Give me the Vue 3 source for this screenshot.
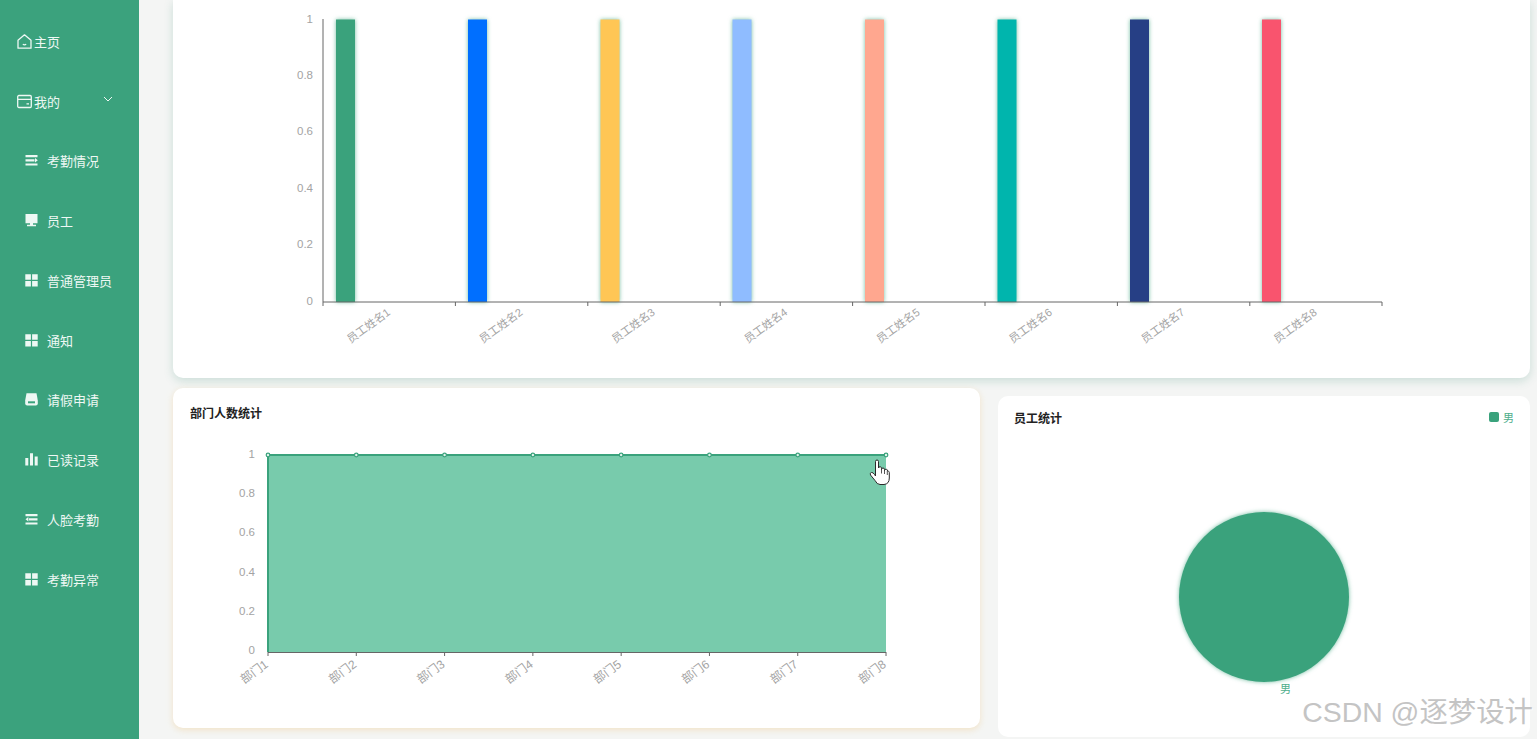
<template>
  <div class="page">
    <svg class="defs" width="0" height="0">
      <symbol id="i-home" viewBox="0 0 15 15">
        <path d="M1 6.200 7.500 0.800 14 6.200V14.200H1Z" fill="none" stroke="currentColor" stroke-width="1.300" stroke-linejoin="round" />
        <path d="M5.800 10.300q1.700 1 3.400 0" fill="none" stroke="currentColor" stroke-width="1.300" />
      </symbol>
      <symbol id="i-wallet" viewBox="0 0 15 15">
        <rect x="0.700" y="1.500" width="13.600" height="12" rx="1.200" fill="none" stroke="currentColor" stroke-width="1.300" />
        <path d="M1 5.400H14M9.500 9.800H12" fill="none" stroke="currentColor" stroke-width="1.300" />
      </symbol>
      <symbol id="i-list" viewBox="0 0 13 13">
        <path d="M0.500 1H12.500V3.200H0.500ZM0.500 5.200H9.500V7.400H0.500ZM0.500 9.400H12.500V11.600H0.500Z" fill="currentColor" />
        <path d="M10 4 12.800 6.300 10 8.600Z" fill="currentColor" />
      </symbol>
      <symbol id="i-indent" viewBox="0 0 13 13">
        <path d="M0.500 1H12.500V3.200H0.500ZM3.800 5.200H12.500V7.400H3.800ZM0.500 9.400H12.500V11.600H0.500Z" fill="currentColor" />
        <path d="M3.300 4 0.500 6.300 3.300 8.600Z" fill="currentColor" />
      </symbol>
      <symbol id="i-monitor" viewBox="0 0 13 13">
        <path d="M0.500 0H12.500V9.300H0.500ZM5 9.300H8V10.800H11V12.200H2V10.800H5Z" fill="currentColor" />
      </symbol>
      <symbol id="i-grid" viewBox="0 0 13 13">
        <path d="M0.300 0.300H5.900V5.800H0.300ZM7.100 0.300H12.700V5.800H7.100ZM0.300 7H5.900V12.500H0.300ZM7.100 7H12.700V12.500H7.100Z" fill="currentColor" />
      </symbol>
      <symbol id="i-inbox" viewBox="0 0 13 13">
        <path d="M1.500 0.300H11.500L12.800 7.500V10.500Q12.800 12.500 10.800 12.500H2.200Q0.200 12.500 0.200 10.500V7.500Z" fill="currentColor" />
        <path d="M3 8.300H10V10.300H3Z" fill="#3aa27c" />
      </symbol>
      <symbol id="i-bars" viewBox="0 0 13 13">
        <path d="M0.300 5H3.300V12.500H0.300ZM5 0.300H8V12.500H5ZM9.700 3.500H12.700V12.500H9.700Z" fill="currentColor" />
      </symbol>
    </svg>

    <aside class="sidebar">
      <div v-for="item in menu" :key="item.label" class="menu-item" :class="{ sub: item.sub }">
        <svg class="menu-icon"><use :href="'#' + item.icon" /></svg>
        <span>{{ item.label }}</span>
        <svg v-if="item.arrow" class="arrow" viewBox="0 0 10 6">
          <path d="M1 1 5 5 9 1" fill="none" stroke="currentColor" stroke-width="1" />
        </svg>
      </div>
    </aside>

    <main class="main">
      <section class="card top-card">
        <svg class="chart" width="1357" height="378" viewBox="173 0 1357 378">
          <g v-for="(bar, i) in bars" :key="bar.name">
            <rect class="bar" :x="bar.x" y="19.500" width="19" height="282.500" :fill="bar.color" />
            <line :x1="323 + i * 132.400" y1="302" :x2="323 + i * 132.400" y2="306" class="axis" />
            <text class="tick tick-x" text-anchor="end" :transform="`translate(${391 + i * 132.400} 314) rotate(-36)`">{{ bar.name }}</text>
          </g>
          <line x1="1382" y1="302" x2="1382" y2="306" class="axis" />
          <line x1="323" y1="19" x2="323" y2="302" class="axis" />
          <line x1="323" y1="302" x2="1382" y2="302" class="axis" />
          <text v-for="t in barTicks" :key="t.label" class="tick" x="313" :y="t.y" text-anchor="end">{{ t.label }}</text>
        </svg>
      </section>

      <div class="bottom-row">
        <section class="card dept-card">
          <h3 class="card-title">部门人数统计</h3>
          <svg class="chart" width="807" height="298" viewBox="173 430 807 298">
            <rect x="268" y="455" width="618" height="197" fill="#78cbac" />
            <path d="M268 652V455H886" fill="none" stroke="#3aa27c" stroke-width="2" />
            <line x1="268" y1="652.500" x2="886" y2="652.500" class="axis" />
            <g v-for="(p, i) in depts" :key="p">
              <line :x1="268 + i * 88.290" y1="652" :x2="268 + i * 88.290" y2="656" class="axis" />
              <circle :cx="268 + i * 88.290" cy="455" r="1.800" fill="#dff3eb" stroke="#3aa27c" stroke-width="1.200" />
              <text class="tick tick-dept" text-anchor="end" :transform="`translate(${269 + i * 88.290} 666) rotate(-36)`">{{ p }}</text>
            </g>
            <text v-for="t in areaTicks" :key="t.label" class="tick" x="255" :y="t.y" text-anchor="end">{{ t.label }}</text>
            <!-- 鼠标手型 -->
            <path d="M875.500 461.500a1.500 1.500 0 0 1 3 0V468a1.500 1.500 0 0 1 3 .5v1a1.500 1.500 0 0 1 3 0v1a1.400 1.400 0 0 1 3 0.500c1 0 1.800 .5 1.800 1.500V478q0 6-5.300 6.500h-4q-3 0-5-4l-4.500-5.500q-1-2 1-2.500q1.500-.3 3 2l1 1.500Z" fill="#fff" stroke="#2b2b2b" stroke-width="1" stroke-linejoin="round" />
            <path d="M881.500 469v4.500M884.500 470v4M887.300 471v4" stroke="#2b2b2b" stroke-width="0.800" fill="none" />
          </svg>
        </section>

        <section class="card staff-card">
          <div class="staff-head">
            <h3 class="card-title">员工统计</h3>
            <div class="legend"><i class="legend-mark"></i><span>男</span></div>
          </div>
          <div class="pie-wrap">
            <div class="pie"></div>
            <span class="pie-label">男</span>
          </div>
        </section>
      </div>
    </main>

    <div class="watermark">CSDN @逐梦设计</div>
  </div>
</template>

<script setup>
const menu = [
  { label: '主页', icon: 'i-home' },
  { label: '我的', icon: 'i-wallet', arrow: true },
  { label: '考勤情况', icon: 'i-list', sub: true },
  { label: '员工', icon: 'i-monitor', sub: true },
  { label: '普通管理员', icon: 'i-grid', sub: true },
  { label: '通知', icon: 'i-grid', sub: true },
  { label: '请假申请', icon: 'i-inbox', sub: true },
  { label: '已读记录', icon: 'i-bars', sub: true },
  { label: '人脸考勤', icon: 'i-indent', sub: true },
  { label: '考勤异常', icon: 'i-grid', sub: true },
];

const barColors = ['#3aa27c', '#006fff', '#ffc655', '#8fbcff', '#ffa78f', '#00b5ad', '#263f85', '#f9546e'];
const barX = [336, 468, 600.5, 732.5, 865, 997.5, 1130, 1262];
const bars = barColors.map((color, i) => ({ name: `员工姓名${i + 1}`, color, x: barX[i] }));

const barTicks = [
  { label: '1', y: 23 },
  { label: '0.8', y: 79 },
  { label: '0.6', y: 135 },
  { label: '0.4', y: 192 },
  { label: '0.2', y: 248 },
  { label: '0', y: 305 },
];

const depts = Array.from({ length: 8 }, (_, i) => `部门${i + 1}`);

const areaTicks = [
  { label: '1', y: 458 },
  { label: '0.8', y: 497 },
  { label: '0.6', y: 536 },
  { label: '0.4', y: 576 },
  { label: '0.2', y: 615 },
  { label: '0', y: 654 },
];
</script>

<style>
html,
body {
  margin: 0;
  overflow: hidden;
}
</style>

<style scoped>
.page {
  display: flex;
  position: relative;
  width: 1537px;
  height: 739px;
  overflow: hidden;
  background: #f4f5f4;
  font-family: "Liberation Sans", "Noto Sans CJK SC", sans-serif;
}
.defs {
  position: absolute;
}

/* 左侧菜单 */
.sidebar {
  flex: 0 0 139px;
  padding-top: 11.5px;
  background: #3ba27d;
  color: #eef8f4;
  font-size: 13px;
}
.menu-item {
  display: flex;
  align-items: center;
  gap: 2px;
  height: 59.75px;
  padding-left: 17px;
}
.menu-item.sub {
  gap: 9px;
  padding-left: 25px;
}
.menu-icon {
  width: 15px;
  height: 15px;
  flex: none;
}
.sub .menu-icon {
  width: 13px;
  height: 13px;
}
.arrow {
  width: 10px;
  height: 6px;
  margin-top: -5px;
  margin-left: 41px;
}

/* 内容区 */
.main {
  flex: 1;
  padding: 0 7px 0 34px;
}
.card {
  background: #fff;
  border-radius: 10px;
}
.top-card {
  height: 378px;
  border-radius: 0 0 10px 10px;
  box-shadow: 0 3px 10px rgba(58, 140, 120, 0.22);
}
.chart {
  display: block;
}
.axis {
  stroke: #666;
  stroke-width: 1;
}
.tick {
  fill: #a3a3a3;
  font-size: 11.5px;
}
.tick-x {
  font-size: 11px;
}
.tick-dept {
  font-size: 12px;
}
.bar {
  filter: drop-shadow(0 0 2px rgba(58, 162, 124, 0.7));
}

.bottom-row {
  display: flex;
  align-items: flex-start;
  gap: 18px;
  margin-top: 10px;
}
.card-title {
  margin: 0;
  color: #222;
  font-size: 12px;
  font-weight: 700;
  line-height: 18px;
}
.dept-card {
  flex: 0 0 807px;
  height: 340px;
  box-shadow: 0 2px 6px rgba(240, 215, 170, 0.6);
}
.dept-card .card-title {
  height: 42px;
  padding: 17px 0 0 17px;
  box-sizing: border-box;
}
.staff-card {
  flex: 1;
  height: 341px;
  margin-top: 8px;
  display: flex;
  flex-direction: column;
}
.staff-head {
  display: flex;
  justify-content: space-between;
  align-items: center;
  padding: 14px 16px 0 16px;
}
.legend {
  display: flex;
  align-items: center;
  gap: 4px;
  color: #4fae8b;
  font-size: 11px;
  margin-top: -4px;
}
.legend-mark {
  width: 10px;
  height: 10px;
  border-radius: 2px;
  background: #3aa27c;
}
.pie-wrap {
  position: relative;
  margin: 84px 0 0 181px;
  width: 170px;
}
.pie {
  width: 170px;
  height: 170px;
  border-radius: 50%;
  background: #3aa27c;
  box-shadow: 0 0 4px rgba(58, 162, 124, 0.7);
}
.pie-label {
  position: absolute;
  left: 101px;
  top: 168px;
  color: #4fae8b;
  font-size: 11px;
}

.watermark {
  position: absolute;
  right: 4px;
  top: 694px;
  color: #c4c4c4;
  font-size: 28.4px;
  line-height: 36px;
  white-space: nowrap;
  text-shadow: 1px 1px 1px rgba(255, 255, 255, 0.8);
}
</style>
